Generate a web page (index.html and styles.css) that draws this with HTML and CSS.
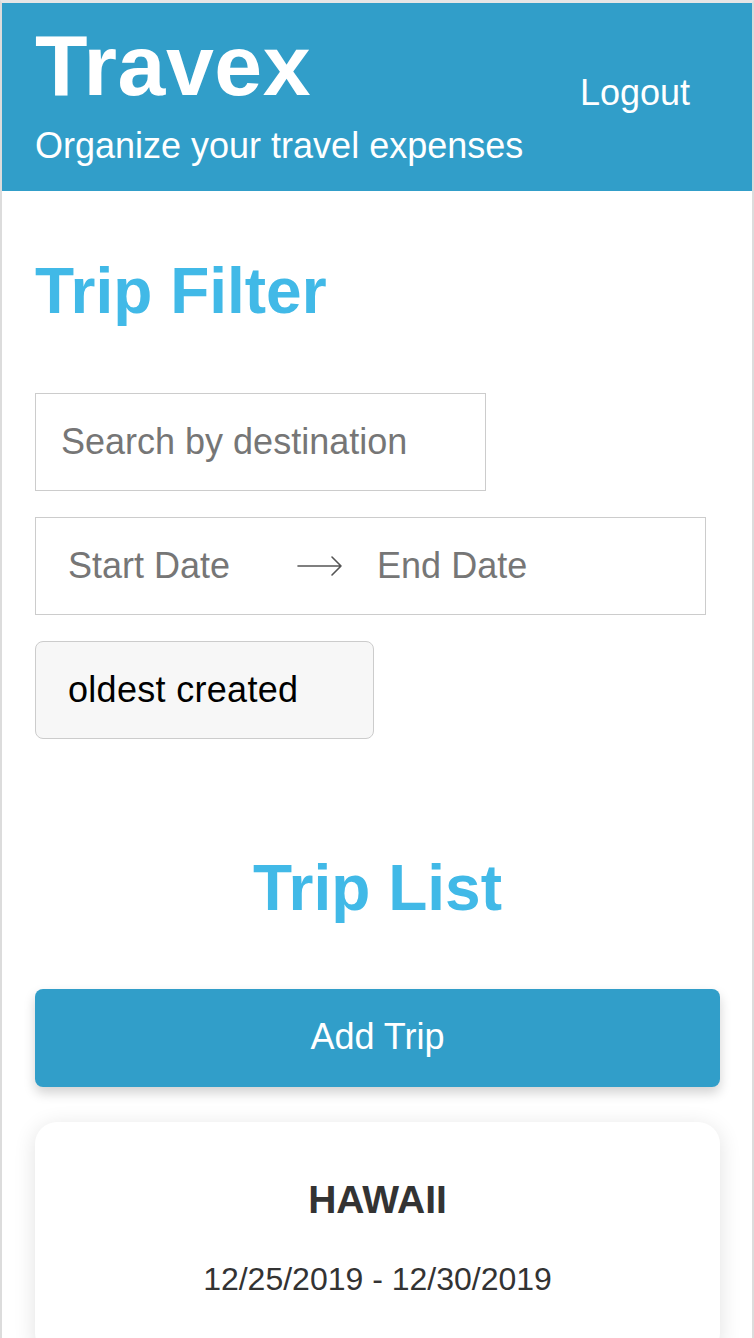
FILE: index.html
```html
<!DOCTYPE html>
<html lang="en">
<head>
<meta charset="utf-8">
<title>Travex</title>
<link rel="stylesheet" href="styles.css">
</head>
<body>
<div class="frame">
  <header class="header">
    <div class="brand">
      <h1 class="logo">Travex</h1>
      <p class="tagline">Organize your travel expenses</p>
    </div>
    <a class="logout" href="#">Logout</a>
  </header>
  <main class="main">
    <h2 class="section-title">Trip Filter</h2>
    <div class="field search">
      <span class="placeholder">Search by destination</span>
    </div>
    <div class="field range">
      <span class="placeholder">Start Date</span>
      <svg class="arrow" width="46" height="22" viewBox="0 0 46 22" aria-hidden="true">
        <path d="M1 11 H44 M35 2 L44 11 L35 20" fill="none" stroke="#555" stroke-width="1.6" stroke-linecap="round" stroke-linejoin="round"/>
      </svg>
      <span class="placeholder">End Date</span>
    </div>
    <div class="field select">
      <span class="value">oldest created</span>
    </div>
    <h2 class="section-title center">Trip List</h2>
    <button class="add-btn" type="button">Add Trip</button>
    <div class="card">
      <div class="card-title">HAWAII</div>
      <div class="card-dates">12/25/2019 - 12/30/2019</div>
    </div>
  </main>
</div>
</body>
</html>
```

FILE: styles.css
```css
* { box-sizing: border-box; }
html, body {
  margin: 0;
  padding: 0;
  background: #fff;
  font-family: "Liberation Sans", Arial, Helvetica, sans-serif;
  overflow: hidden;
}
.frame {
  border-top: 3px solid #e6e6e6;
  border-left: 2px solid #dcdcdc;
  border-right: 2px solid #dcdcdc;
  min-height: 1338px;
}
.header {
  background: #319ec9;
  height: 188px;
  padding: 19px 62px 0 33px;
  display: flex;
  justify-content: space-between;
  align-items: flex-start;
  color: #fff;
}
.logo {
  margin: 0;
  font-size: 86px;
  line-height: 1;
  font-weight: 700;
  letter-spacing: 0.6px;
}
.tagline {
  margin: 20px 0 0 0;
  font-size: 36px;
  line-height: 1;
  font-weight: 400;
}
.logout {
  margin-top: 53px;
  font-size: 36px;
  line-height: 1;
  color: #fff;
  text-decoration: none;
}
.main {
  padding: 0 32px 0 33px;
  display: flex;
  flex-direction: column;
  align-items: flex-start;
}
.section-title {
  margin: 68px 0 0 0;
  font-size: 64px;
  line-height: 1;
  font-weight: 700;
  color: #41b9e7;
  letter-spacing: 0;
}
.section-title.center {
  align-self: stretch;
  text-align: center;
  margin-top: 117px;
}
.field {
  height: 98px;
  border: 1px solid #cccccc;
  display: flex;
  align-items: center;
  font-size: 36px;
  line-height: 1;
}
.placeholder { color: #767676; }
.search {
  margin-top: 70px;
  width: 451px;
  padding-left: 25px;
}
.range {
  margin-top: 26px;
  width: 671px;
  padding-left: 32px;
}
.arrow {
  margin: 0 34px 0 67px;
  display: block;
}
.select {
  margin-top: 26px;
  width: 339px;
  padding-left: 32px;
  background: #f7f7f7;
  border-radius: 8px;
  color: #000;
}
.select .value { letter-spacing: 0.3px; }
.add-btn {
  margin-top: 69px;
  align-self: stretch;
  height: 98px;
  border: none;
  border-radius: 8px;
  background: #319ec9;
  color: #fff;
  font-family: inherit;
  font-size: 36px;
  line-height: 1;
  box-shadow: 0 6px 12px rgba(0, 0, 0, 0.18);
  padding: 0 0 3px 0;
}
.card {
  margin-top: 35px;
  align-self: stretch;
  background: #fff;
  border-radius: 22px;
  box-shadow: 0 4px 22px rgba(0, 0, 0, 0.12);
  padding: 58px 0 60px 0;
  text-align: center;
  color: #333;
}
.card-title {
  font-size: 39px;
  line-height: 1;
  font-weight: 700;
  letter-spacing: 0;
}
.card-dates {
  margin-top: 44px;
  font-size: 32px;
  line-height: 1;
}
```
